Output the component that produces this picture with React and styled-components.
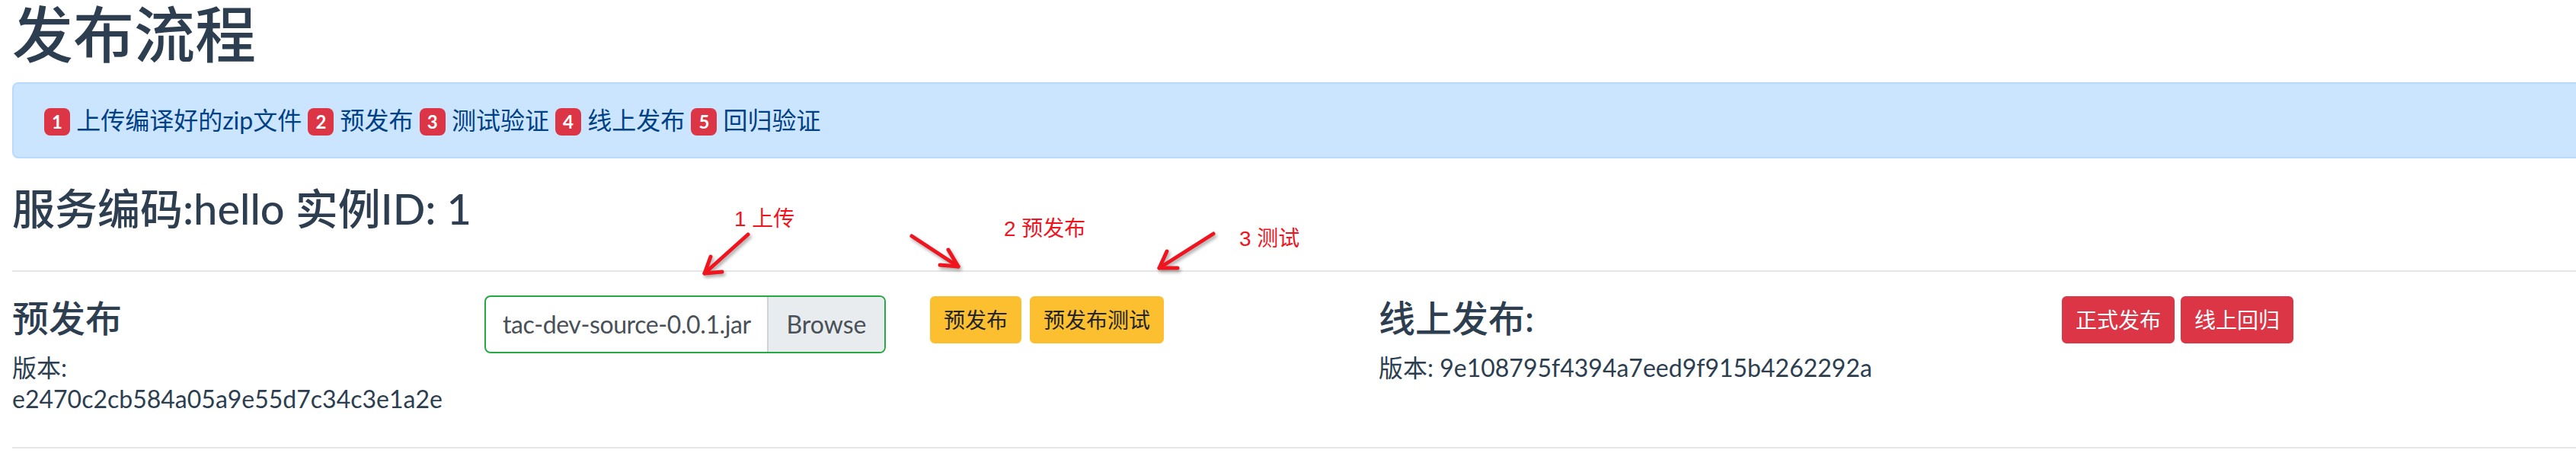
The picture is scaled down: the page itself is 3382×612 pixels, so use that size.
import React from "react";
import styled, { createGlobalStyle } from "styled-components";

const GlobalStyle = createGlobalStyle`
  html, body {
    margin: 0;
    overflow: hidden;
    background: #ffffff;
  }
  * {
    box-sizing: border-box;
  }
`;

const steps = ["上传编译好的zip文件", "预发布", "测试验证", "线上发布", "回归验证"];

const notes = [
  { text: "1 上传", left: 964, top: 274 },
  { text: "2 预发布", left: 1318, top: 287 },
  { text: "3 测试", left: 1627, top: 300 },
];

const arrows = [
  { line: "M982 308 L925 359", head: "M933 337 L925 359 L948 357" },
  { line: "M1197 310 L1258 350", head: "M1245 328 L1258 350 L1234 348" },
  { line: "M1593 307 L1522 352", head: "M1532 330 L1522 352 L1546 352" },
];

const App = () => {
  return (
    <>
      <GlobalStyle />
      <Page>
        <Title>发布流程</Title>
        <Alert>
          {steps.map((s, i) => (
            <React.Fragment key={s}>
              <Badge>{i + 1}</Badge> {s}{" "}
            </React.Fragment>
          ))}
        </Alert>
        <ServiceTitle>服务编码:hello 实例ID: 1</ServiceTitle>
        <Divider $top={48} $bottom={32} />
        <Row>
          <Col $narrow>
            <SectionTitle>预发布</SectionTitle>
            <Version>版本: e2470c2cb584a05a9e55d7c34c3e1a2e</Version>
          </Col>
          <Col>
            <FileInput>
              <FileName>tac-dev-source-0.0.1.jar</FileName>
              <Browse>Browse</Browse>
            </FileInput>
          </Col>
          <Col>
            <Buttons $gap={11}>
              <Button $variant="warning">预发布</Button>
              <Button $variant="warning">预发布测试</Button>
            </Buttons>
          </Col>
          <Col>
            <SectionTitle>线上发布:</SectionTitle>
            <Version>版本: 9e108795f4394a7eed9f915b4262292a</Version>
          </Col>
          <Col>
            <Buttons $gap={8}>
              <Button $variant="danger">正式发布</Button>
              <Button $variant="danger">线上回归</Button>
            </Buttons>
          </Col>
        </Row>
        <Divider $top={0} $bottom={0} />

        {notes.map((n) => (
          <Note key={n.text} style={{ left: n.left, top: n.top }}>
            {n.text}
          </Note>
        ))}
        <Arrows viewBox="0 0 3382 612" width="3382" height="612">
          {arrows.map((a, i) => (
            <g key={i}>
              <path d={a.line} />
              <path d={a.head} />
            </g>
          ))}
        </Arrows>
      </Page>
    </>
  );
};

const Page = styled.div`
  position: relative;
  display: flow-root;
  width: 3382px;
  height: 612px;
  padding-left: 16px;
  color: #2c3e50;
  font-family: Lato, "Noto Sans CJK SC", sans-serif;
  -webkit-font-smoothing: antialiased;
`;

const Title = styled.h1`
  margin: -4px 0 16px;
  font-size: 80px;
  font-weight: 500;
  line-height: 96px;
`;

const Alert = styled.div`
  margin: 0 -24px 32px 0;
  padding: 24px 40px;
  background: #cce5ff;
  border: 2px solid #b8daff;
  border-radius: 8px;
  color: #004085;
  font-size: 32px;
  line-height: 48px;
`;

const Badge = styled.span`
  display: inline-block;
  padding: 6px 10px;
  background: #dc3545;
  color: #ffffff;
  border-radius: 8px;
  font-size: 24px;
  font-weight: 700;
  line-height: 1;
  vertical-align: 1px;
`;

const ServiceTitle = styled.h3`
  margin: 0 0 16px;
  font-size: 56px;
  font-weight: 500;
  line-height: 67px;
`;

const Divider = styled.hr`
  margin: ${(p) => p.$top}px 0 ${(p) => p.$bottom}px;
  border: 0;
  border-top: 2px solid rgba(0, 0, 0, 0.1);
`;

const Row = styled.div`
  display: grid;
  grid-template-columns: 620px 585px 589px 897px 1fr;
  align-items: start;
  margin-bottom: 43px;
`;

const Col = styled.div`
  padding-right: ${(p) => (p.$narrow ? 60 : 0)}px;
`;

const SectionTitle = styled.h4`
  margin: 0 0 16px;
  font-size: 48px;
  font-weight: 500;
  line-height: 57px;
`;

const Version = styled.p`
  margin: 0;
  font-size: 32px;
  line-height: 41px;
`;

const FileInput = styled.div`
  display: flex;
  width: 527px;
  height: 76px;
  margin-top: -1px;
  border: 2px solid #28a745;
  border-radius: 8px;
  overflow: hidden;
  color: #495057;
  font-size: 32px;
  line-height: 72px;
`;

const FileName = styled.span`
  flex: 1;
  min-width: 0;
  padding-left: 22px;
  overflow: hidden;
  white-space: nowrap;
  letter-spacing: -0.4px;
`;

const Browse = styled.span`
  flex: 0 0 154px;
  background: #e9ecef;
  border-left: 2px solid #ced4da;
  text-align: center;
`;

const Buttons = styled.div`
  display: flex;
  gap: ${(p) => p.$gap}px;
`;

const Button = styled.button`
  padding: 8px 16px;
  border: 2px solid ${(p) => (p.$variant === "danger" ? "#dc3545" : "#fcbf2f")};
  border-radius: 6px;
  background: ${(p) => (p.$variant === "danger" ? "#dc3545" : "#fcbf2f")};
  color: ${(p) => (p.$variant === "danger" ? "#ffffff" : "#212529")};
  font-family: Lato, "Noto Sans CJK SC", sans-serif;
  font-size: 28px;
  line-height: 42px;
`;

const Note = styled.span`
  position: absolute;
  color: #f0141e;
  font-family: "Liberation Sans", "Noto Sans CJK SC", sans-serif;
  font-size: 28px;
  line-height: 1;
  white-space: nowrap;
`;

const Arrows = styled.svg`
  position: absolute;
  top: 0;
  left: 0;
  pointer-events: none;
  fill: none;
  stroke: #f0141e;
  stroke-width: 5;
  stroke-linecap: round;
  stroke-linejoin: round;
  filter: drop-shadow(2px 3px 2px rgba(0, 0, 0, 0.35));
`;

export default App;
